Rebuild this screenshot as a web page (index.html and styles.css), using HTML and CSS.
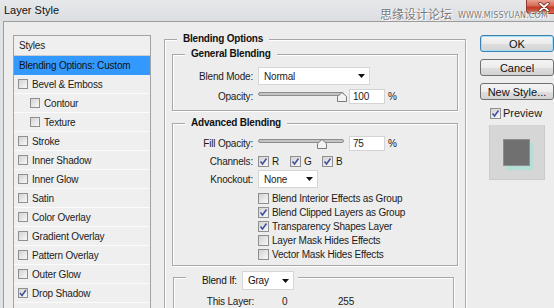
FILE: index.html
```html
<!DOCTYPE html>
<html>
<head>
<meta charset="utf-8">
<title>Layer Style</title>
<link rel="stylesheet" href="styles.css">
</head>
<body>
<div class="titlebar">
  <span class="title">Layer Style</span>
  <span class="close"><svg width="12" height="10" viewBox="0 0 12 10"><path d="M2 1.5 L10 8.5 M10 1.5 L2 8.5" stroke="#5a1a10" stroke-width="3.2" stroke-linecap="round"/><path d="M2 1.5 L10 8.5 M10 1.5 L2 8.5" stroke="#fff" stroke-width="1.8" stroke-linecap="round"/></svg></span>
</div>
<div class="watermark"><span class="wm-cn">思缘设计论坛</span><span class="wm-en">WWW.MISSYUAN.COM</span></div>

<div class="window">
  <div class="styles">
    <div class="st-head">Styles</div>
    <div class="st-row sel">Blending Options: Custom</div>
    <div class="st-row"><span class="cb sm"></span>Bevel &amp; Emboss</div>
    <div class="st-row sub"><span class="cb sm"></span>Contour</div>
    <div class="st-row sub"><span class="cb sm"></span>Texture</div>
    <div class="st-row"><span class="cb sm"></span>Stroke</div>
    <div class="st-row"><span class="cb sm"></span>Inner Shadow</div>
    <div class="st-row"><span class="cb sm"></span>Inner Glow</div>
    <div class="st-row"><span class="cb sm"></span>Satin</div>
    <div class="st-row"><span class="cb sm"></span>Color Overlay</div>
    <div class="st-row"><span class="cb sm"></span>Gradient Overlay</div>
    <div class="st-row"><span class="cb sm"></span>Pattern Overlay</div>
    <div class="st-row"><span class="cb sm"></span>Outer Glow</div>
    <div class="st-row"><span class="cb sm"><svg width="8" height="8" viewBox="0 0 8 8"><path d="M1 4 L3 6.5 L7 1" fill="none" stroke="#3a4f9e" stroke-width="1.4"/></svg></span>Drop Shadow</div>
    <div class="st-row"></div>
  </div>

  <fieldset class="grp main">
    <legend>Blending Options</legend>

    <fieldset class="grp general">
      <legend>General Blending</legend>
      <div class="row sel-row">
        <span class="lbl">Blend Mode:</span>
        <div class="select w-mode"><span>Normal</span><svg width="7" height="4" viewBox="0 0 7 4"><path d="M0 0H7L3.5 4Z" fill="#111"/></svg></div>
      </div>
      <div class="row gap3">
        <span class="lbl">Opacity:</span>
        <svg class="slider" width="91" height="16" viewBox="0 0 91 16"><rect x="0.5" y="4.5" width="85" height="3" rx="1.5" fill="#c4c4c4" stroke="#8d8d8d"/><path d="M79.5 13.5V8.5L84 4.5L88.5 8.5V13.5Z" fill="#f3f3f3" stroke="#7b7b7b"/></svg>
        <span class="num">100</span><span class="pct">%</span>
      </div>
    </fieldset>

    <fieldset class="grp advanced">
      <legend>Advanced Blending</legend>
      <div class="row">
        <span class="lbl">Fill Opacity:</span>
        <svg class="slider" width="91" height="16" viewBox="0 0 91 16"><rect x="0.5" y="4.5" width="85" height="3" rx="1.5" fill="#c4c4c4" stroke="#8d8d8d"/><path d="M59.5 13.5V8.5L64 4.5L68.5 8.5V13.5Z" fill="#f3f3f3" stroke="#7b7b7b"/></svg>
        <span class="num">75</span><span class="pct">%</span>
      </div>
      <div class="row chan-row">
        <span class="lbl">Channels:</span>
        <span class="chan"><span class="cb"><svg width="9" height="9" viewBox="0 0 9 9"><path d="M1.5 4.5 L3.5 7 L7.5 1.5" fill="none" stroke="#3a4f9e" stroke-width="1.5"/></svg></span>R</span>
        <span class="chan"><span class="cb"><svg width="9" height="9" viewBox="0 0 9 9"><path d="M1.5 4.5 L3.5 7 L7.5 1.5" fill="none" stroke="#3a4f9e" stroke-width="1.5"/></svg></span>G</span>
        <span class="chan"><span class="cb"><svg width="9" height="9" viewBox="0 0 9 9"><path d="M1.5 4.5 L3.5 7 L7.5 1.5" fill="none" stroke="#3a4f9e" stroke-width="1.5"/></svg></span>B</span>
      </div>
      <div class="row sel-row knock">
        <span class="lbl">Knockout:</span>
        <div class="select w-knock"><span>None</span><svg width="7" height="4" viewBox="0 0 7 4"><path d="M0 0H7L3.5 4Z" fill="#111"/></svg></div>
      </div>
      <div class="opts">
        <div class="opt"><span class="cb"></span>Blend Interior Effects as Group</div>
        <div class="opt"><span class="cb"><svg width="9" height="9" viewBox="0 0 9 9"><path d="M1.5 4.5 L3.5 7 L7.5 1.5" fill="none" stroke="#3a4f9e" stroke-width="1.5"/></svg></span>Blend Clipped Layers as Group</div>
        <div class="opt"><span class="cb"><svg width="9" height="9" viewBox="0 0 9 9"><path d="M1.5 4.5 L3.5 7 L7.5 1.5" fill="none" stroke="#3a4f9e" stroke-width="1.5"/></svg></span>Transparency Shapes Layer</div>
        <div class="opt"><span class="cb"></span>Layer Mask Hides Effects</div>
        <div class="opt"><span class="cb"></span>Vector Mask Hides Effects</div>
      </div>
    </fieldset>

    <fieldset class="grp blendif">
      <legend class="bi-legend"><span class="bi"><span class="bi-lbl">Blend If:</span><span class="select w-gray"><span>Gray</span><svg width="7" height="4" viewBox="0 0 7 4"><path d="M0 0H7L3.5 4Z" fill="#111"/></svg></span></span></legend>
      <div class="row layer-row">
        <span class="lbl">This Layer:</span>
        <span class="val0">0</span><span>255</span>
      </div>
    </fieldset>
  </fieldset>

  <div class="side">
    <div class="btn ok">OK</div>
    <div class="btn">Cancel</div>
    <div class="btn">New Style...</div>
    <div class="pv"><span class="cb"><svg width="9" height="9" viewBox="0 0 9 9"><path d="M1.5 4.5 L3.5 7 L7.5 1.5" fill="none" stroke="#3a4f9e" stroke-width="1.5"/></svg></span>Preview</div>
    <div class="swatch"><div class="sq"></div></div>
  </div>
</div>
</body>
</html>
```

FILE: styles.css
```css
* { box-sizing: border-box; }
html, body { margin: 0; padding: 0; }
body {
  width: 554px;
  height: 308px;
  overflow: hidden;
  position: relative;
  background: #e0e3e6;
  font-family: "Liberation Sans", Arial, sans-serif;
  font-size: 10px;
  letter-spacing: -0.2px;
  color: #1b1b1b;
}

/* title bar */
.titlebar {
  height: 21px;
  display: flex;
  align-items: flex-start;
  background: linear-gradient(#e6e8ea, #dcdfe2);
}
.title {
  font-size: 11px;
  line-height: 14px;
  margin: 3px 0 0 4px;
  letter-spacing: 0;
  color: #111;
}
.close {
  margin-left: auto;
  width: 28px;
  height: 14px;
  border: 1px solid #8c3a2c;
  border-top: none;
  border-right: none;
  border-radius: 0 0 0 4px;
  background: linear-gradient(#e9a090 0%, #d66a55 45%, #c03a22 55%, #d46e52 100%);
  display: flex;
  align-items: center;
  justify-content: flex-end;
  padding-right: 4px;
}
.watermark {
  position: absolute;
  left: 380px;
  top: 6px;
  display: flex;
  align-items: flex-end;
  gap: 6px;
  color: #777;
  text-shadow: 1px 1px 0 #fff, 0 0 1px #fff;
}
.wm-cn {
  font-family: "Noto Sans CJK SC", sans-serif;
  font-size: 12px;
  line-height: 15px;
  letter-spacing: 0;
}
.wm-en {
  font-family: "DejaVu Sans", sans-serif;
  font-size: 8px;
  line-height: 11px;
  letter-spacing: 0.1px;
}

/* window */
.window {
  margin-left: 3px;
  height: 287px;
  border-left: 1px solid #9c9c9c;
  border-top: 1px solid #9c9c9c;
  background: #ededed;
  display: flex;
  align-items: flex-start;
  padding: 13px 0 0 9px;
  overflow: hidden;
}

/* styles list */
.styles {
  flex: none;
  width: 138px;
  height: 290px;
  border: 1px solid #a3a3a3;
  background: #efefef;
}
.st-head {
  height: 20px;
  line-height: 19px;
  padding-left: 5px;
  border-bottom: 1px solid #cdcdcd;
}
.st-row {
  height: 19px;
  border-bottom: 1px solid #fbfbfb;
  display: flex;
  align-items: center;
  gap: 4px;
  padding-left: 4px;
}
.st-row.sub { padding-left: 16px; }
.st-row.sel {
  background: #3399ff;
  border-bottom-color: #3399ff;
  padding-left: 5px;
  color: #111;
}

/* checkbox */
.cb {
  flex: none;
  width: 11px;
  height: 11px;
  border: 1px solid #8f8f8f;
  background: linear-gradient(135deg, #d3d3d3, #f8f8f8);
  display: inline-flex;
  align-items: center;
  justify-content: center;
}
.cb.sm { width: 10px; height: 10px; }

/* group boxes */
.grp {
  margin: 0;
  padding: 0;
  min-width: 0;
  border: 1px solid #a8a8a8;
  box-shadow: inset 1px 1px 0 #fff, 1px 1px 0 #fff;
}
.grp legend {
  font-weight: bold;
  line-height: 12px;
  height: 12px;
  padding: 0 6px;
  margin-left: 12px;
  background: #ededed;
  color: #111;
}
.main {
  flex: none;
  margin: -2px 0 0 13px;
  width: 302px;
  height: 300px;
}
.general {
  margin: 3px 7px 0;
  padding: 7px 0 6px;
}
.advanced {
  margin: 6px 7px 0;
  padding: 6px 0 4px;
}
.blendif {
  margin: 5px 11px 0 8px;
  padding: 12px 0 0;
  height: 40px;
}
.grp legend.bi-legend {
  font-weight: normal;
  padding: 0 4px 0 16px;
}
.bi {
  display: flex;
  align-items: center;
  height: 19px;
  gap: 5px;
}

/* rows */
.row {
  display: flex;
  align-items: center;
  height: 16px;
}
.row + .row { margin-top: 3px; }
.sel-row { height: 18px; }
.chan-row { margin-top: 2px !important; }
.knock { margin-top: 1px !important; }
.lbl {
  flex: none;
  width: 80px;
  margin-right: 5px;
  text-align: right;
}
.select {
  height: 18px;
  background: #fff;
  border: 1px solid #d6d6d6;
  display: flex;
  align-items: center;
  justify-content: space-between;
  padding: 0 4px 0 5px;
}
.w-mode { width: 112px; }
.w-knock { width: 60px; }
.w-gray { width: 52px; height: 19px; }
.slider { flex: none; display: block; }
.num {
  width: 36px;
  height: 15px;
  line-height: 13px;
  background: #fff;
  border: 1px solid #d4d4d4;
  padding-left: 3px;
}
.pct { margin-left: 3px; }
.chan {
  width: 32px;
  display: flex;
  align-items: center;
  gap: 3px;
}
.opts {
  margin-top: 3px;
  padding-left: 85px;
}
.opt {
  height: 14px;
  display: flex;
  align-items: center;
  gap: 3px;
}
.layer-row { height: 12px; }
.val0 { width: 56px; margin-left: 23px; }

/* side buttons */
.side {
  flex: none;
  margin-left: 14px;
  width: 74px;
  display: flex;
  flex-direction: column;
}
.btn {
  height: 17px;
  margin-bottom: 7px;
  border: 1px solid #707070;
  border-radius: 3px;
  background: linear-gradient(#f4f4f4 0%, #ececec 50%, #dfdfdf 52%, #d2d2d2 100%);
  font-size: 11px;
  letter-spacing: 0;
  display: flex;
  align-items: center;
  justify-content: center;
  color: #111;
}
.btn.ok {
  border-color: #3c7fb1;
  box-shadow: inset 0 0 0 1px #a6e0f6;
}
.pv {
  height: 12px;
  display: flex;
  align-items: center;
  gap: 2px;
  margin-left: 10px;
  font-size: 11px;
  letter-spacing: 0;
}
.swatch {
  margin: 6px 0 0 9px;
  width: 56px;
  height: 55px;
  background: #d6d6d6;
  border: 1px solid #cbcbcb;
  border-top: none;
  padding: 14px 0 0 13px;
}
.sq {
  width: 27px;
  height: 27px;
  background: #707070;
  border: 1px solid #8e8e8e;
  box-shadow: 3px 4px 1px #b4ded6;
}
```
